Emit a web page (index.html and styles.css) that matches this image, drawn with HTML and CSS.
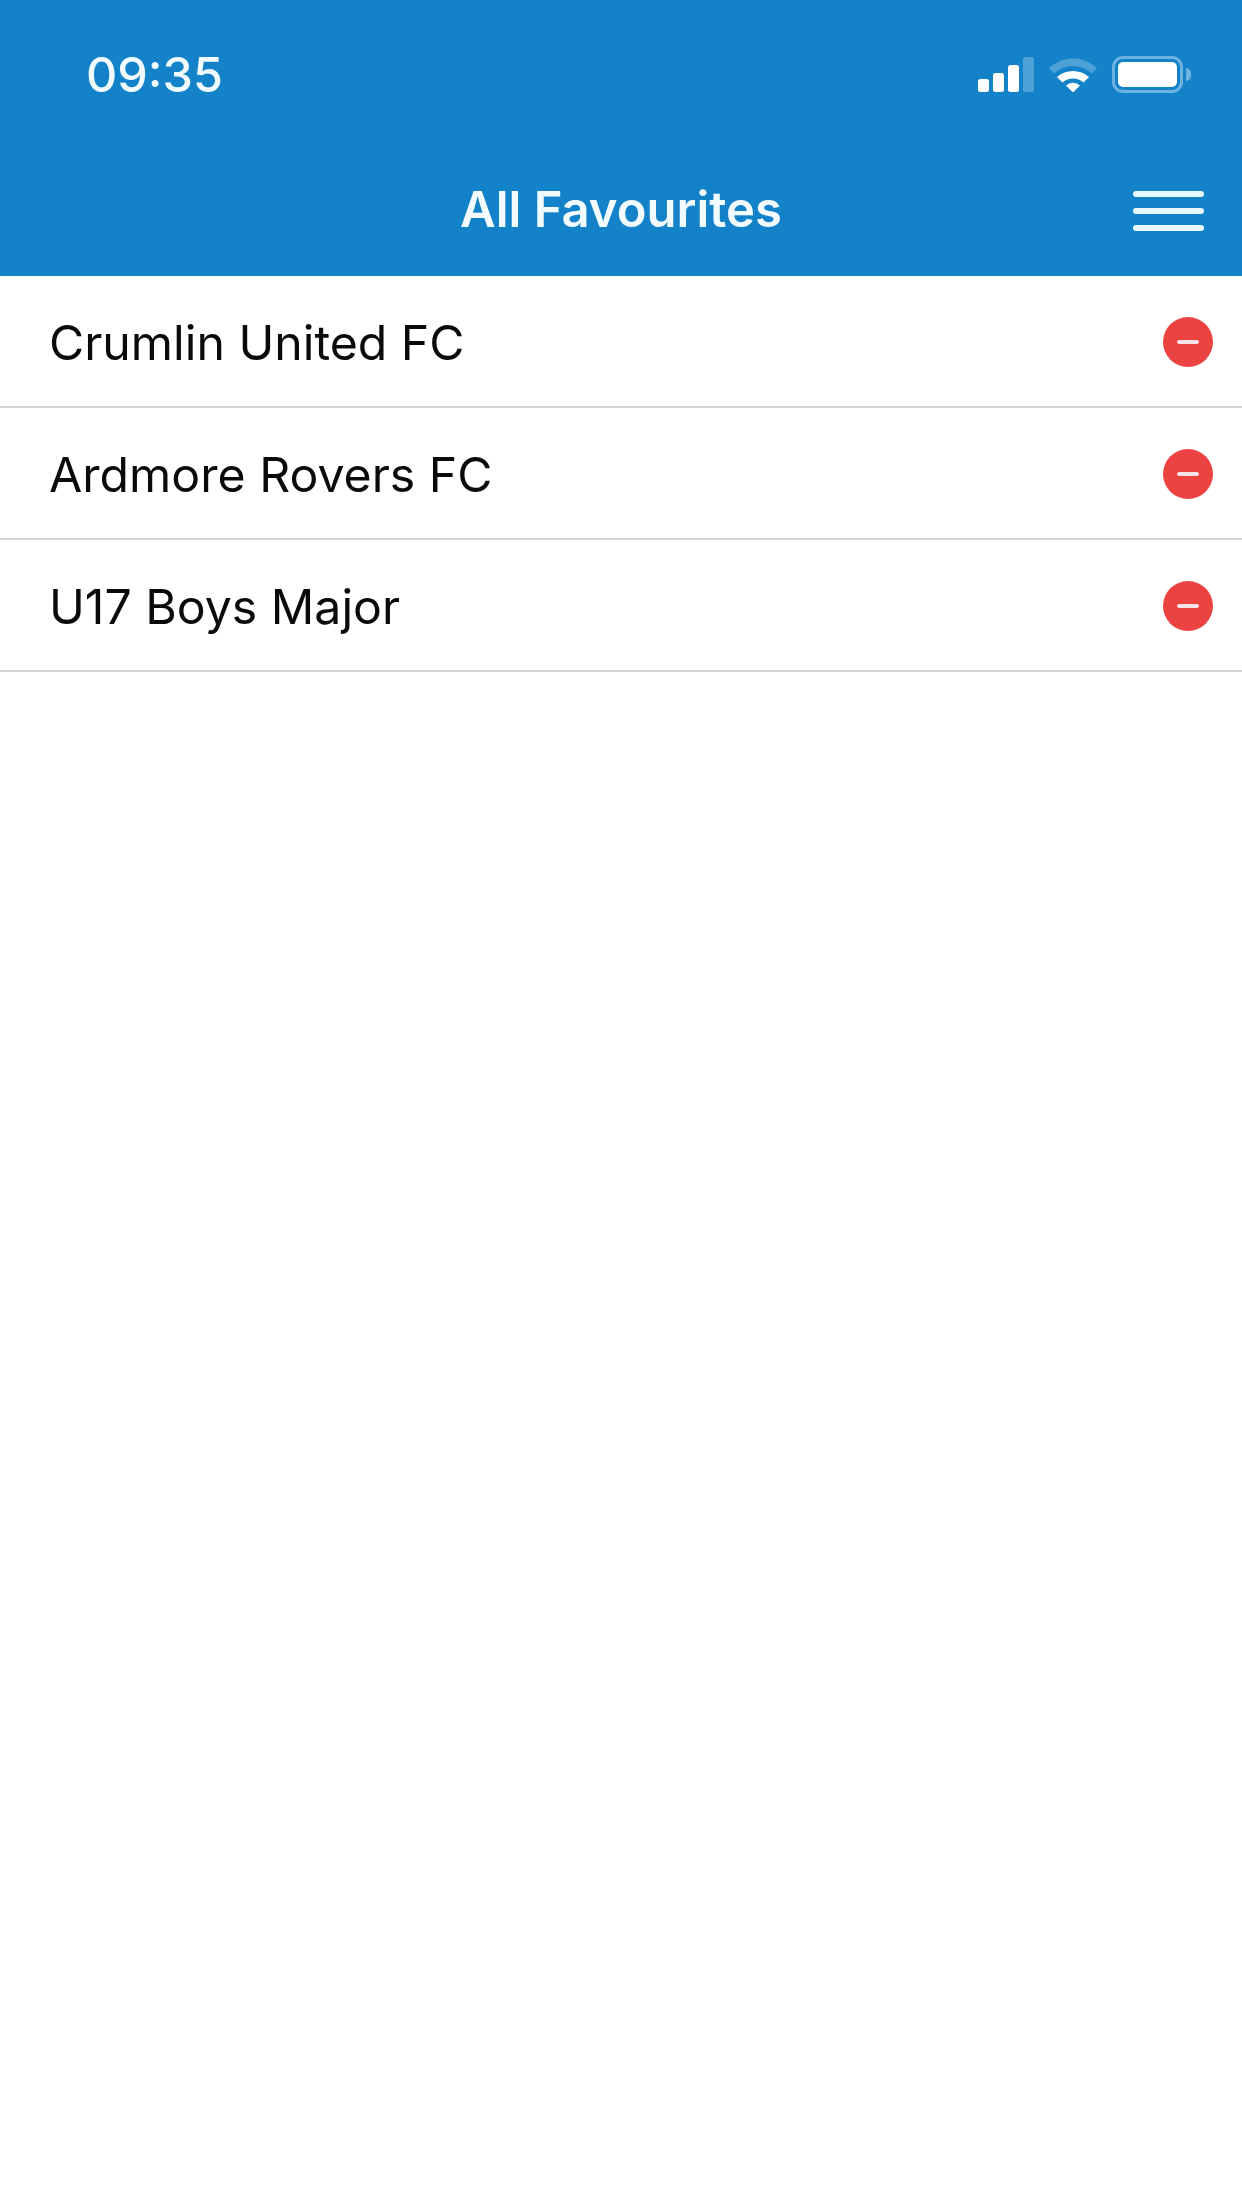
FILE: index.html
```html
<!DOCTYPE html>
<html lang="en">
<head>
<meta charset="utf-8">
<title>All Favourites</title>
<link rel="stylesheet" href="styles.css">
</head>
<body>
<header class="header">
  <div class="status">
    <span class="time">09:35</span>
    <div class="status-icons">
      <svg class="signal" width="56" height="35" viewBox="0 0 56 35">
        <rect x="0" y="22" width="11" height="13" rx="2.5" fill="#fff"/>
        <rect x="15" y="16" width="11" height="19" rx="2.5" fill="#fff"/>
        <rect x="30" y="8" width="11" height="27" rx="2.5" fill="#fff"/>
        <rect x="45" y="0" width="11" height="35" rx="2.5" fill="#fff" fill-opacity=".25"/>
      </svg>
      <svg class="wifi" width="48" height="35" viewBox="0 0 48 35">
        <path d="M0 11 A35 35 0 0 1 48 11 L43 16.500 A28 28 0 0 0 5 16.500 Z" fill="#fff" fill-opacity=".25"/>
        <path d="M8 20 A24 24 0 0 1 40 20 L34.500 25.500 A16 16 0 0 0 13.500 25.500 Z" fill="#fff"/>
        <path d="M17 28.500 A10.500 10.500 0 0 1 31 28.500 L24 35.500 Z" fill="#fff"/>
      </svg>
      <div class="battery">
        <div class="battery-body"><div class="battery-fill"></div></div>
        <div class="battery-nub"></div>
      </div>
    </div>
  </div>
  <div class="nav">
    <h1 class="title">All Favourites</h1>
    <button class="menu" aria-label="Menu"><span></span><span></span><span></span></button>
  </div>
</header>
<ul class="list">
  <li class="row"><span class="name">Crumlin United FC</span><span class="remove"></span></li>
  <li class="row"><span class="name">Ardmore Rovers FC</span><span class="remove"></span></li>
  <li class="row"><span class="name">U17 Boys Major</span><span class="remove"></span></li>
</ul>
</body>
</html>
```
FILE: styles.css
```css
* { box-sizing: border-box; }
html, body { margin: 0; padding: 0; }
body {
  width: 1242px;
  height: 2208px;
  background: #fff;
  font-family: Inter, "Liberation Sans", sans-serif;
  overflow: hidden;
}
.header {
  height: 276px;
  background: #1382c8;
  color: #f2fbff;
  display: flex;
  flex-direction: column;
}
.status {
  height: 150px;
  padding: 56px 51px 0 86px;
  display: flex;
  justify-content: space-between;
  align-items: flex-start;
}
.time {
  margin-top: 1px;
  font-size: 48.5px;
  font-weight: 500;
  line-height: 36px;
}
.status-icons {
  display: flex;
  align-items: flex-start;
  gap: 15px;
}
.signal, .wifi { display: block; margin-top: 1px; }
.battery { display: flex; align-items: center; gap: 3px; height: 37px; }
.battery-body {
  width: 71px;
  height: 37px;
  border: 3px solid #6db3e2;
  border-radius: 11px;
  padding: 3px;
}
.battery-fill { width: 100%; height: 100%; background: #fff; border-radius: 5px; }
.battery-nub {
  width: 5px;
  height: 13px;
  background: #6db3e2;
  border-radius: 0 5px 5px 0;
}
.nav {
  position: relative;
  height: 126px;
  display: flex;
  justify-content: center;
}
.title {
  margin: 31px 0 0;
  font-size: 49px;
  font-weight: 600;
  line-height: 58px;
}
.menu {
  position: absolute;
  left: 1133px;
  top: 41px;
  width: 71px;
  height: 40px;
  padding: 0;
  border: 0;
  background: none;
  display: flex;
  flex-direction: column;
  justify-content: space-between;
}
.menu span {
  display: block;
  width: 100%;
  height: 6px;
  border-radius: 3px;
  background: #e9f7ff;
}
.list { list-style: none; margin: 0; padding: 0; }
.row {
  height: 132px;
  padding: 2px 29px 0 49px;
  display: flex;
  align-items: center;
  justify-content: space-between;
  border-bottom: 2px solid #d4d4d6;
}
.name {
  padding-top: 1px;
  font-size: 48.2px;
  line-height: 58px;
  color: #0a0a0a;
}
.remove {
  width: 50px;
  height: 50px;
  border-radius: 50%;
  background: #ec4241;
  display: flex;
  align-items: center;
  justify-content: center;
}
.remove::before {
  content: "";
  width: 22px;
  height: 4px;
  border-radius: 2px;
  background: #f8e4e4;
}
```
